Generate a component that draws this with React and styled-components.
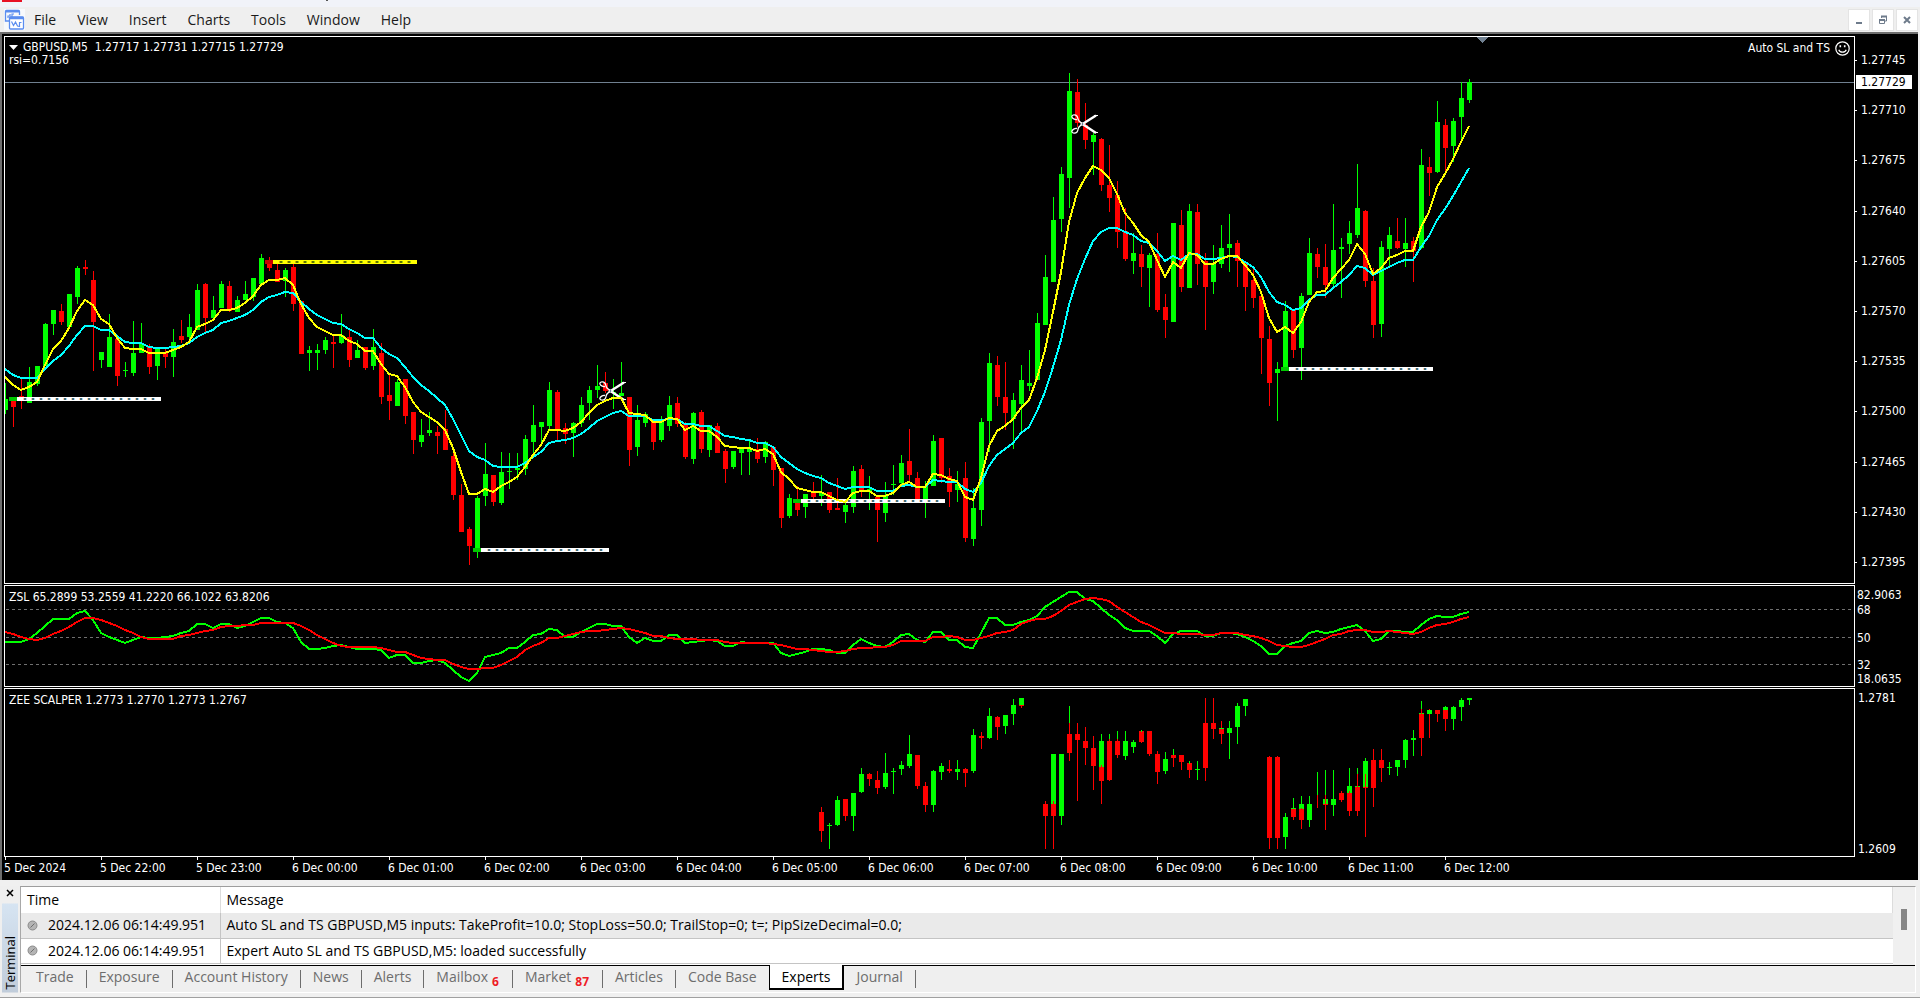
import React from "react";
import styled, { createGlobalStyle } from "styled-components";

const UI_FONT = `"Open Sans", "Noto Sans", sans-serif`;
const CHART_FONT = `"DejaVu Sans Condensed", "DejaVu Sans", sans-serif`;

const GlobalStyle = createGlobalStyle`
  * {
    box-sizing: border-box;
  }

  body {
    margin: 0;
    background: #f0f0f0;
    font-family: ${UI_FONT};
    font-size: 14px;
    color: #000;
  }

  button {
    font: inherit;
    padding: 0;
    border: none;
    background: none;
  }
`;

const Window = styled.div`
  display: flex;
  flex-direction: column;
  min-height: 100vh;
  overflow: hidden;
`;

/* ---------- title strip and menu ---------- */

const TitleStrip = styled.div`
  display: flex;
  gap: 304px;
  height: 7px;
  padding-left: 2px;
  background: #f1f3f9;
`;

const TitleMark = styled.span`
  width: ${({ $width }) => $width}px;
  height: ${({ $height }) => $height}px;
  background: ${({ $color }) => $color};
`;

const MenuBar = styled.header`
  display: flex;
  align-items: center;
  height: 25px;
  padding: 0 2px 0 4px;
  background: #efefef;
`;

const Menu = styled.nav`
  display: flex;
  flex: 1;
  gap: 21px;
  margin-left: 9px;
`;

const MenuItem = styled.button`
  line-height: 20px;
  color: #1a1a1a;
`;

const WindowButtons = styled.div`
  display: flex;
  gap: 2px;
`;

const WindowButton = styled.button`
  display: flex;
  align-items: center;
  justify-content: center;
  width: 22px;
  height: 22px;
  background: #fff;
  border: 1px solid #e4e4e4;
`;

/* ---------- chart window ---------- */

const ChartWindow = styled.main`
  margin-right: 2px;
  padding: 2px 0 0 4px;
  background: #000;
  border-top: 2px solid #6e6e6e;
  box-shadow: inset 2px 0 0 #6e6e6e;
  font-family: ${CHART_FONT};
  font-size: 12px;
  line-height: 13px;
  color: #fff;
`;

const Panel = styled.section`
  display: grid;
  grid-template-columns: minmax(0, 1fr) 63px;
  margin-bottom: ${({ $last }) => ($last ? 0 : 1)}px;
`;

const Plot = styled.div`
  position: relative;
  border: 1px solid #fff;
  overflow: hidden;

  > svg {
    display: block;
  }
`;

const PlotTitle = styled.div`
  position: absolute;
  top: ${({ $top }) => $top}px;
  left: 4px;
  white-space: pre;
`;

const SymbolLine = styled.div`
  display: flex;
  align-items: center;
  gap: 5px;
`;

const ExpertLabel = styled.div`
  position: absolute;
  top: 4px;
  right: 4px;
  display: flex;
  align-items: center;
  gap: 5px;
`;

const Axis = styled.div`
  position: relative;
  display: flex;
  flex-direction: column;
  justify-content: space-between;
  padding: ${({ $pad }) => $pad};
`;

const PriceLabel = styled.span`
  display: flex;
  align-items: center;
  gap: 4px;

  &::before {
    content: "";
    width: 2px;
    height: 1px;
    background: #fff;
  }
`;

const CurrentPrice = styled.span`
  position: absolute;
  top: 39px;
  left: 1px;
  width: 56px;
  padding: 1px 0 0 5px;
  line-height: 13px;
  background: #fff;
  color: #000;
`;

const LevelLabel = styled.span`
  position: absolute;
  top: ${({ $top }) => $top}px;
  left: 2px;
`;

const TimeAxis = styled.div`
  display: flex;
  height: 23px;
`;

const TimeLabel = styled.span`
  width: 96px;
  flex: none;
  white-space: nowrap;
  padding-top: 2px;

  &::before {
    content: "";
    display: block;
    width: 1px;
    height: 3px;
    margin: -2px 0 2px 1px;
    background: #fff;
  }
`;

/* ---------- terminal ---------- */

const Terminal = styled.footer`
  display: flex;
  margin: 6px 4px 0 0;
  background: #efefef;
`;

const Gutter = styled.div`
  display: flex;
  flex-direction: column;
  align-items: center;
  width: 20px;
`;

const CloseTerminal = styled.button`
  display: flex;
  align-items: center;
  justify-content: center;
  width: 20px;
  height: 14px;
`;

const SideLabel = styled.div`
  flex: 1;
  width: 16px;
  margin-top: 4px;
  padding-top: 3px;
  writing-mode: vertical-rl;
  transform: rotate(180deg);
  font-size: 13px;
  line-height: 16px;
  background: linear-gradient(to top, #d6e4f2, #c0ccda);
`;

const TerminalBody = styled.div`
  flex: 1;
  min-width: 0;
  border-top: 1px solid #9d9d9d;
  border-left: 1px solid #a8a8a8;
  border-right: 1px solid #fff;
  border-bottom: 1px solid #fff;
`;

const LogArea = styled.div`
  display: flex;
  background: #fff;
  border-bottom: 1px solid #000;
`;

const LogTable = styled.table`
  flex: 1;
  table-layout: fixed;
  border-collapse: collapse;
  margin-bottom: 1px;
`;

const HeadCell = styled.th`
  width: ${({ $width }) => $width || "auto"};
  height: 26px;
  padding: 0 6px;
  font-weight: 400;
  line-height: 20px;
  text-align: left;
  border-right: 1px solid #dcdcdc;
`;

const LogRow = styled.tr`
  background: ${({ $striped }) => ($striped ? "#eaeaea" : "#fff")};
`;

const LogCell = styled.td`
  height: 25px;
  padding: 0 6px;
  line-height: 20px;
  white-space: nowrap;
  border-bottom: 1px solid #c4c4c4;

  &:first-child {
    border-right: 1px solid #c4c4c4;
  }
`;

const Stamp = styled.div`
  display: flex;
  align-items: center;
  gap: 10px;
`;

const ScrollTrack = styled.div`
  width: 22px;
  padding: 22px 0 0 8px;
  background: #f0f0f0;
`;

const ScrollThumb = styled.div`
  width: 6px;
  height: 21px;
  background: #868686;
`;

const Tabs = styled.div`
  display: flex;
  align-items: flex-start;
  height: 26px;
  padding-left: 3px;
`;

const Tab = styled.button`
  display: flex;
  align-items: center;
  height: ${({ $active }) => ($active ? 25 : 24)}px;
  margin-top: ${({ $active }) => ($active ? -1 : 0)}px;
  padding: 0 12px ${({ $active }) => ($active ? 0 : 2)}px;
  color: ${({ $active }) => ($active ? "#000" : "#6d6d6d")};
  background: ${({ $active }) => ($active ? "#fff" : "transparent")};
  border: ${({ $active }) => ($active ? "1px solid #000" : "none")};
  border-top: none;
  border-right-width: ${({ $active }) => ($active ? 2 : 0)}px;
  border-bottom-width: ${({ $active }) => ($active ? 2 : 0)}px;
`;

const TabDivider = styled.span`
  width: 1px;
  height: 18px;
  margin-top: 4px;
  background: #6d6d6d;
`;

const Badge = styled.sub`
  align-self: flex-end;
  margin: 0 1px -2px 4px;
  font-size: 12px;
  font-weight: 700;
  line-height: 16px;
  color: #ee1c25;
`;

const BottomEdge = styled.div`
  height: 1px;
  margin-top: 4px;
  background: #a0a0a0;
`;

/* ---------- data ---------- */

const STEP = 8;
const barX = (i) => 5 + i * STEP;

// g/r = up/down bar, then high, body top, body bottom, low
const PRICE_BARS = `
g383,399,410,414 r397,397,407,427 r379,396,398,409 g367,382,403,403 g366,366,384,386 g323,324,366,366
g310,310,324,335 r304,311,322,325 g294,294,327,327 g266,268,297,304 r260,267,269,275 r271,280,322,371
g352,352,360,368 g314,337,367,367 r339,339,376,386 g362,370,371,377 g321,353,373,376 g323,344,353,353
r344,346,367,374 g349,349,366,380 r349,353,357,368 g329,342,357,377 r320,336,340,343 g314,327,337,342
g284,290,330,330 r283,284,318,333 g296,310,318,318 g281,284,308,308 r281,286,311,312 g296,300,312,312
g281,294,300,300 g278,278,297,301 g254,258,284,286 r257,260,268,271 r264,270,282,282 g268,270,281,297
r264,267,304,311 r301,301,354,354 g346,350,353,371 g344,350,353,370 g337,340,350,354 r335,342,344,368
g314,335,343,344 r330,337,360,367 g340,350,358,358 r347,347,368,370 g329,347,366,370 r343,353,397,404
r375,395,401,420 g379,382,406,406 r379,379,416,424 r412,412,440,454 g419,435,442,447 g412,430,433,436
r426,432,436,454 r410,429,450,450 r448,456,495,500 r484,495,532,532 r527,529,546,565 g496,498,552,558
g443,474,496,506 r475,475,502,506 g452,472,503,505 g453,471,472,489 g453,468,470,480 g435,439,469,475
g405,425,442,455 g422,422,427,445 g382,390,426,430 r390,392,429,440 r423,428,434,444 g422,423,433,457
g397,405,423,427 g386,390,403,420 g365,386,390,398 r372,383,391,393 g379,392,393,409 g362,393,396,396
r397,397,450,466 g405,420,447,456 g412,414,423,427 r421,421,442,450 g416,420,440,442 g396,405,426,431
r397,403,424,427 r422,424,457,459 g412,413,459,464 r410,412,449,453 g425,425,450,457 r423,426,453,453
r449,451,469,483 g451,451,467,469 g447,449,453,475 g441,449,452,475 r438,449,459,463 g441,442,457,463
r447,447,470,486 r468,468,518,528 g494,498,516,518 r486,501,510,516 g494,494,507,518 r482,493,497,500
g475,493,496,506 r492,492,510,513 r478,508,510,510 g500,505,512,523 g466,471,507,513 r465,469,490,497
g476,489,491,510 r495,497,510,542 g482,495,513,522 g465,484,485,495 g455,463,483,487 r429,461,475,483
r472,478,500,500 g481,486,503,518 g435,441,486,486 r438,438,478,483 r468,476,492,507 g471,484,490,502
r462,478,538,542 g488,508,539,546 g418,422,510,526 g353,363,421,452 r356,365,397,406 r362,397,413,430
g393,400,419,449 g365,380,404,433 g350,383,386,391 g313,323,380,380 g255,277,325,325 g197,220,282,282
g167,174,219,232 g73,91,178,208 r79,92,123,127 r103,125,140,149 g133,135,142,175 r138,139,185,191
r145,185,198,212 r181,195,232,248 r208,231,259,261 g233,253,261,274 r245,254,267,287 g253,255,268,307
r233,254,310,312 r294,307,320,338 g223,223,322,322 r210,225,287,292 g204,211,288,288 r204,212,264,285
r253,261,287,330 g245,264,282,294 g225,248,264,268 g214,244,248,272 r240,243,261,287 r262,262,287,311
r268,280,298,308 r293,296,338,374 r326,339,383,406 g362,369,373,421 g301,311,370,370 r310,310,350,358
g293,296,348,380 g238,253,295,295 r248,254,267,278 r244,267,285,298 g204,250,284,288 g238,247,249,298
g221,233,244,254 g164,208,235,238 r210,211,281,287 r268,281,325,338 g241,247,324,337 g227,235,249,267
r218,241,248,249 g218,243,249,267 r237,241,251,282 g149,165,248,249 r157,167,173,196 g101,122,172,173
r119,125,148,173 g118,121,146,162 g82,98,117,142 g79,82,100,103`;

// same fields, preceded by the bar index
const SCALPER_BARS = `
102r807,812,831,842 103g823,825,826,849 104g796,800,825,826 105r799,799,816,821 106g793,793,816,831
107g768,774,792,793 108r773,774,779,786 109r771,780,788,794 110g753,773,787,789 111g768,771,772,794
112g761,765,769,775 113g735,754,766,768 114r755,755,786,789 115r782,786,805,812 116g770,771,805,812
117g763,766,772,780 118r760,769,771,773 119g760,769,772,780 120r768,769,773,787 121g729,735,771,773
122r732,736,738,749 123g708,716,738,739 124r716,717,727,740 125g715,715,726,734 126g699,705,714,725
127g698,698,705,705 127r705,705,706,708 130r801,804,816,849 131g754,754,804,804 131r801,804,816,849
132g754,754,816,825 133g706,723,723,723 133r723,734,753,761 134r723,734,740,801 135r727,741,748,765
136r736,748,766,790 137g734,741,767,767 137r765,767,781,804 138g734,739,739,739 138r739,741,780,781
139g731,739,739,739 139r739,741,755,758 140g731,741,756,760 141g740,742,747,753 142r731,731,742,743
142g730,732,732,732 143r731,731,754,756 144r751,754,772,784 145g752,759,771,774 146g749,755,755,755
146r755,755,758,767 147r755,755,762,770 148r763,763,770,778 148g761,764,764,764 149g761,769,770,780
150r698,723,768,781 151r698,723,729,739 152r721,729,734,744 152g728,728,729,729 153g721,728,733,759
154g703,706,727,744 155g699,699,706,716 158r756,757,838,849 159r756,757,838,849 160g813,817,837,849
161g798,808,809,809 161r809,809,817,820 162g796,804,809,809 162r808,809,820,829 163g796,804,820,827
164g772,795,795,795 164r795,808,808,808 165g770,799,804,804 165r795,804,805,830 166g770,799,805,816
167r791,793,800,802 168g768,786,793,793 168r791,793,811,816 169g768,786,787,787 169r774,787,811,816
170g758,761,788,788 170r774,787,788,837 171r749,760,788,807 172r749,760,768,782 173g762,767,768,775
174g760,760,767,776 175g739,740,760,768 176g730,738,740,756 177g701,713,714,714 177r709,714,738,756
178r709,714,714,738 178g710,710,714,714 179r710,710,714,722 180g706,707,710,710 180r710,710,719,731
181g706,707,719,730 182g698,700,707,721 183g698,698,700,705`;

const FAST_MA = [
  377, 385, 390, 387, 382, 365, 349, 341, 328, 311, 300, 305, 319, 324, 338, 348, 349, 349, 353, 353,
  353, 350, 347, 342, 327, 324, 320, 310, 310, 308, 303, 296, 285, 280, 280, 278, 285, 304, 318, 327,
  331, 335, 335, 341, 344, 351, 351, 364, 374, 376, 387, 402, 412, 417, 422, 430, 448, 472, 494, 494,
  489, 492, 486, 482, 477, 467, 455, 445, 430, 430, 431, 428, 422, 413, 405, 401, 398, 398, 413, 414,
  415, 422, 422, 418, 419, 430, 426, 431, 431, 437, 446, 447, 448, 448, 451, 449, 454, 472, 479, 488,
  490, 492, 492, 496, 500, 502, 493, 491, 491, 496, 496, 493, 485, 482, 487, 487, 474, 475, 479, 481,
  497, 500, 478, 446, 431, 426, 419, 408, 400, 378, 350, 312, 272, 222, 193, 178, 166, 170, 178, 194,
  213, 223, 235, 242, 260, 277, 262, 268, 253, 255, 264, 264, 259, 256, 256, 265, 275, 292, 318, 332,
  327, 333, 322, 302, 292, 291, 278, 269, 260, 244, 254, 274, 268, 258, 255, 251, 251, 227, 212, 187,
  174, 159, 142, 126,
];

const SLOW_MA = [
  369, 375, 378, 378, 378, 369, 361, 355, 346, 335, 326, 326, 330, 330, 336, 342, 343, 343, 347, 348,
  348, 347, 346, 343, 337, 333, 330, 323, 321, 318, 315, 310, 302, 297, 295, 292, 293, 302, 309, 315,
  319, 323, 324, 329, 333, 338, 338, 348, 354, 358, 367, 377, 385, 391, 398, 405, 419, 435, 451, 457,
  460, 466, 467, 467, 467, 463, 457, 452, 443, 441, 440, 438, 434, 428, 421, 417, 413, 411, 416, 416,
  416, 420, 420, 419, 419, 424, 424, 426, 426, 431, 436, 437, 439, 440, 443, 443, 447, 457, 463, 469,
  473, 476, 478, 483, 486, 489, 487, 487, 487, 491, 491, 491, 486, 485, 487, 487, 480, 481, 482, 482,
  489, 492, 483, 466, 455, 449, 443, 433, 427, 411, 392, 367, 340, 305, 279, 259, 241, 232, 228, 228,
  232, 235, 241, 243, 251, 261, 256, 260, 254, 254, 259, 259, 258, 256, 257, 262, 267, 277, 292, 302,
  305, 310, 308, 300, 295, 295, 288, 282, 275, 266, 268, 275, 271, 267, 263, 260, 260, 247, 236, 220,
  209, 196, 182, 168,
];

const ZSL_FAST = [
  642, 642, 642, 639, 633, 626, 619, 619, 619, 613, 611, 620, 633, 637, 640, 643, 640, 637, 638, 638,
  637, 636, 633, 631, 624, 624, 628, 624, 624, 628, 626, 622, 618, 618, 622, 623, 628, 642, 649, 649,
  648, 646, 645, 647, 649, 649, 649, 650, 658, 655, 655, 663, 663, 661, 660, 663, 670, 677, 681, 673,
  657, 655, 653, 648, 648, 642, 635, 634, 629, 630, 637, 637, 632, 628, 624, 624, 626, 626, 637, 643,
  638, 641, 641, 635, 635, 643, 642, 641, 640, 641, 646, 646, 642, 643, 643, 643, 643, 653, 656, 654,
  652, 649, 649, 650, 653, 653, 645, 639, 643, 646, 647, 642, 635, 634, 640, 642, 632, 632, 640, 640,
  647, 648, 633, 618, 618, 625, 625, 622, 620, 616, 607, 602, 597, 592, 592, 599, 601, 608, 615, 620,
  628, 631, 631, 631, 636, 643, 634, 631, 631, 631, 636, 636, 633, 633, 634, 637, 641, 646, 654, 654,
  646, 643, 641, 633, 631, 633, 632, 629, 627, 625, 631, 641, 639, 631, 631, 632, 632, 625, 619, 616,
  617, 617, 614, 612,
];

const ZSL_SLOW = [
  632, 634, 637, 639, 640, 638, 634, 631, 627, 622, 618, 618, 620, 623, 626, 630, 633, 637, 639, 639,
  639, 639, 636, 635, 633, 631, 630, 627, 626, 626, 625, 625, 623, 623, 623, 623, 623, 626, 630, 635,
  639, 643, 646, 647, 647, 647, 647, 648, 650, 652, 652, 655, 658, 659, 660, 660, 664, 667, 669, 669,
  668, 668, 665, 661, 657, 650, 646, 643, 638, 638, 636, 634, 632, 631, 631, 630, 629, 628, 629, 631,
  633, 636, 636, 638, 639, 639, 639, 640, 640, 640, 642, 643, 643, 643, 643, 643, 644, 645, 647, 649,
  649, 650, 651, 652, 652, 651, 649, 648, 648, 647, 647, 645, 641, 641, 641, 641, 637, 637, 636, 637,
  640, 640, 638, 636, 633, 632, 630, 624, 621, 619, 619, 616, 611, 605, 602, 599, 598, 599, 601, 607,
  612, 617, 622, 625, 629, 633, 633, 634, 634, 634, 635, 635, 633, 633, 633, 635, 636, 638, 641, 645,
  646, 647, 647, 645, 642, 639, 635, 634, 631, 630, 630, 632, 632, 631, 632, 633, 634, 632, 628, 625,
  624, 622, 619, 617,
];

const LEVELS = [
  { from: 9, to: 161, y: 397, color: "#fff", start: "#00c800" },
  { from: 265, to: 417, y: 260, color: "#ff0", start: "#c80000" },
  { from: 473, to: 609, y: 548, color: "#fff", start: "#00c800" },
  { from: 793, to: 945, y: 499, color: "#fff", start: "#00c800" },
  { from: 1281, to: 1433, y: 367, color: "#fff", start: "#00c800" },
];

const PRICES = [
  "1.27745", "1.27710", "1.27675", "1.27640", "1.27605", "1.27570",
  "1.27535", "1.27500", "1.27465", "1.27430", "1.27395",
];

const TIMES = [
  "5 Dec 2024", "5 Dec 22:00", "5 Dec 23:00", "6 Dec 00:00", "6 Dec 01:00", "6 Dec 02:00",
  "6 Dec 03:00", "6 Dec 04:00", "6 Dec 05:00", "6 Dec 06:00", "6 Dec 07:00", "6 Dec 08:00",
  "6 Dec 09:00", "6 Dec 10:00", "6 Dec 11:00", "6 Dec 12:00",
];

const MENU = ["File", "View", "Insert", "Charts", "Tools", "Window", "Help"];

const LOG = [
  {
    time: "2024.12.06 06:14:49.951",
    message:
      "Auto SL and TS GBPUSD,M5 inputs: TakeProfit=10.0; StopLoss=50.0; TrailStop=0; t=; PipSizeDecimal=0.0;",
  },
  {
    time: "2024.12.06 06:14:49.951",
    message: "Expert Auto SL and TS GBPUSD,M5: loaded successfully",
  },
];

const TABS = [
  { name: "Trade" },
  { name: "Exposure" },
  { name: "Account History" },
  { name: "News" },
  { name: "Alerts" },
  { name: "Mailbox", badge: 6 },
  { name: "Market", badge: 87 },
  { name: "Articles" },
  { name: "Code Base" },
  { name: "Experts", active: true },
  { name: "Journal" },
];

const parseBars = (text) =>
  text
    .trim()
    .split(/\s+/)
    .map((item, n) => {
      const [, index, dir, rest] = item.match(/^(\d*)([gr])(.+)$/);
      const [high, top, bottom, low] = rest.split(",").map(Number);
      return { i: index ? Number(index) : n, dir, high, top, bottom, low };
    });

/* ---------- drawings ---------- */

const Bars = ({ data }) =>
  parseBars(data).map(({ i, dir, high, top, bottom, low }, key) => (
    <g key={key} fill={dir === "g" ? "#0f0" : "#f00"}>
      <rect x={barX(i)} y={high} width="1" height={low - high} />
      <rect x={barX(i) - 2} y={top} width="5" height={bottom - top} />
    </g>
  ));

const Line = ({ values, color }) => (
  <polyline
    points={values.map((y, i) => `${barX(i)},${y}`).join(" ")}
    fill="none"
    stroke={color}
    strokeWidth="2"
    strokeLinejoin="round"
  />
);

const Level = ({ from, to, y, color, start }) => {
  const dots = [];
  for (let x = from + 15; x < to - 2; x += STEP) dots.push(x);
  const yellow = color === "#ff0";
  return (
    <g>
      <rect x={from} y={y} width="8" height="4" fill={start} />
      <rect x={from + 8} y={y} width={to - from - 8} height="4" fill={color} />
      {dots.map((x) => (
        <g key={x}>
          <rect x={x - 1} y={y + 1} width="1" height="2" fill={yellow ? "#c8b400" : "#ffd2a0"} />
          <rect x={x} y={y + 1} width="2" height="2" fill={yellow ? "#5c7400" : "#4a7080"} />
          <rect x={x + 2} y={y + 1} width="1" height="2" fill={yellow ? "#9ccc00" : "#a0dcff"} />
        </g>
      ))}
    </g>
  );
};

const Scissors = ({ x, y }) => (
  <g transform={`translate(${x} ${y})`} shapeRendering="auto" fill="none" stroke="#fff">
    <path d="M6 5.500C4 6 1 4.500.8 2.500 1 .5 4.500.3 5.800 2 7 3.500 6.500 5 8 7l3 2.500" strokeWidth="1.300" />
    <path d="M6 14.500C4 14 1 15.500.8 17.500 1 19.500 4.500 19.700 6 18 7.500 16 6.500 15 8 13l3-3" strokeWidth="1.300" />
    <path d="M10 9 25 19M10 11 25 1.500" strokeWidth="2.400" />
    <path d="M23 1.500h4M23 18.500h4" strokeWidth="1.200" />
    <circle cx="11.500" cy="10" r=".8" fill="#246" stroke="none" />
  </g>
);

const Smiley = () => (
  <svg width="15" height="15" viewBox="0 0 15 15" fill="none" stroke="#fff">
    <circle cx="7.500" cy="7.500" r="6.700" strokeWidth="1.200" />
    <path d="M3.800 8.800c1 3.200 6.400 3.200 7.400 0" strokeWidth="1.200" />
    <path d="M5.300 4.300v2M9.700 4.300v2" strokeWidth="1.600" />
  </svg>
);

const ChartsIcon = () => (
  <svg width="21" height="21" viewBox="0 0 21 21" fill="none" stroke="#5b8def">
    <rect width="21" height="21" fill="#f7f9fc" stroke="none" />
    <path d="M5 12H1.500V2.500q0-1 1-1h12q1 0 1 1V6" strokeWidth="1.300" />
    <path d="M1.500 2.500h14" strokeWidth="2" />
    <path d="M4 9V7h2V5m2 3V5h2" strokeWidth="1.200" />
    <rect x="5.500" y="8" width="14" height="12" rx="1" fill="#fff" strokeWidth="1.300" />
    <path d="M5.500 9h14" strokeWidth="2.500" />
    <path d="m7.500 12.500 2 4 2-3.500 2 4 2 .5v-4h2" strokeWidth="1.200" />
  </svg>
);

const PriceChart = () => (
  <svg width="100%" height="546" shapeRendering="crispEdges" role="img" aria-label="GBPUSD M5 candles">
    <g transform="translate(-5 -37)">
      <rect x="5" y="82" width="100%" height="1" fill="#708090" />
      <path d="M1476 37h13l-6.500 6z" fill="#708090" />
      <Bars data={PRICE_BARS} />
      {LEVELS.map((level) => (
        <Level key={level.from} {...level} />
      ))}
      <Scissors x={599} y={381} />
      <Scissors x={1071} y={114} />
      <Line values={SLOW_MA} color="#0ff" />
      <Line values={FAST_MA} color="#ff0" />
    </g>
  </svg>
);

const ZslChart = () => (
  <svg width="100%" height="100" shapeRendering="crispEdges" role="img" aria-label="ZSL oscillator">
    {[23, 51, 78].map((y) => (
      <line key={y} x1="1" x2="100%" y1={y + 0.5} y2={y + 0.5} stroke="#707070" strokeDasharray="3 3" />
    ))}
    <g transform="translate(-5 -586)">
      <Line values={ZSL_FAST} color="#0f0" />
      <Line values={ZSL_SLOW} color="#f00" />
    </g>
  </svg>
);

const ScalperChart = () => (
  <svg width="100%" height="167" shapeRendering="crispEdges" role="img" aria-label="Zee Scalper">
    <g transform="translate(-5 -689)">
      <Bars data={SCALPER_BARS} />
    </g>
  </svg>
);

const App = () => (
  <Window>
    <GlobalStyle />
    <TitleStrip>
      <TitleMark $width={20} $height={2} $color="#e81123" />
      <TitleMark $width={2} $height={1} $color="#555" />
    </TitleStrip>
    <MenuBar>
      <ChartsIcon />
      <Menu>
        {MENU.map((name) => (
          <MenuItem key={name}>{name}</MenuItem>
        ))}
      </Menu>
      <WindowButtons>
        <WindowButton aria-label="Minimize">
          <svg width="12" height="12">
            <path d="M3 8h6v2H3z" fill="#6e7b8b" />
          </svg>
        </WindowButton>
        <WindowButton aria-label="Restore">
          <svg width="12" height="12" fill="none" stroke="#6e7b8b">
            <path d="M4.500 4V2.500h5V7H8" />
            <path d="M4 2.500h6M2 6h6" strokeWidth="2" />
            <path d="M2.500 5.500h5v4h-5z" />
          </svg>
        </WindowButton>
        <WindowButton aria-label="Close">
          <svg width="12" height="12">
            <path d="m3 3 6 6M9 3l-6 6" stroke="#6e7b8b" strokeWidth="2" />
          </svg>
        </WindowButton>
      </WindowButtons>
    </MenuBar>

    <ChartWindow>
      <Panel>
        <Plot>
          <PriceChart />
          <PlotTitle $top={4}>
            <SymbolLine>
              <svg width="9" height="5">
                <path d="M0 0h9L4.500 5z" fill="#fff" />
              </svg>
              <span>GBPUSD,M5{"  "}1.27717 1.27731 1.27715 1.27729</span>
            </SymbolLine>
            <div>rsi=0.7156</div>
          </PlotTitle>
          <ExpertLabel>
            Auto SL and TS
            <Smiley />
          </ExpertLabel>
        </Plot>
        <Axis $pad="18px 0 15px">
          {PRICES.map((price) => (
            <PriceLabel key={price}>{price}</PriceLabel>
          ))}
          <CurrentPrice>1.27729</CurrentPrice>
        </Axis>
      </Panel>
      <Panel>
        <Plot>
          <ZslChart />
          <PlotTitle $top={5}>ZSL 65.2899 53.2559 41.2220 66.1022 63.8206</PlotTitle>
        </Plot>
        <Axis>
          <LevelLabel $top={4}>82.9063</LevelLabel>
          <LevelLabel $top={19}>68</LevelLabel>
          <LevelLabel $top={47}>50</LevelLabel>
          <LevelLabel $top={74}>32</LevelLabel>
          <LevelLabel $top={88}>18.0635</LevelLabel>
        </Axis>
      </Panel>
      <Panel $last>
        <Plot>
          <ScalperChart />
          <PlotTitle $top={5}>ZEE SCALPER 1.2773 1.2770 1.2773 1.2767</PlotTitle>
        </Plot>
        <Axis $pad="4px 0 1px 3px">
          <span>1.2781</span>
          <span>1.2609</span>
        </Axis>
      </Panel>
      <TimeAxis>
        {TIMES.map((time) => (
          <TimeLabel key={time}>{time}</TimeLabel>
        ))}
      </TimeAxis>
    </ChartWindow>

    <Terminal>
      <Gutter>
        <CloseTerminal aria-label="Close terminal">
          <svg width="8" height="8">
            <path d="m1 1 6 6M7 1 1 7" stroke="#000" strokeWidth="1.500" />
          </svg>
        </CloseTerminal>
        <SideLabel>Terminal</SideLabel>
      </Gutter>
      <TerminalBody>
        <LogArea>
          <LogTable>
            <thead>
              <tr>
                <HeadCell $width="199px">Time</HeadCell>
                <HeadCell>Message</HeadCell>
              </tr>
            </thead>
            <tbody>
              {LOG.map((entry, n) => (
                <LogRow key={n} $striped={n % 2 === 0}>
                  <LogCell>
                    <Stamp>
                      <svg width="11" height="11">
                        <circle cx="5.500" cy="5.500" r="4.500" fill="#b4b4b4" stroke="#8a8a8a" />
                        <path d="M3.500 7.500l4-4" stroke="#6e6e6e" />
                      </svg>
                      {entry.time}
                    </Stamp>
                  </LogCell>
                  <LogCell>{entry.message}</LogCell>
                </LogRow>
              ))}
            </tbody>
          </LogTable>
          <ScrollTrack>
            <ScrollThumb />
          </ScrollTrack>
        </LogArea>
        <Tabs>
          {TABS.map(({ name, badge, active }, n) => (
            <React.Fragment key={name}>
              <Tab $active={active}>
                {name}
                {badge && <Badge>{badge}</Badge>}
              </Tab>
              {!active && !(TABS[n + 1] && TABS[n + 1].active) && <TabDivider />}
            </React.Fragment>
          ))}
        </Tabs>
      </TerminalBody>
    </Terminal>
    <BottomEdge />
  </Window>
);

export default App;
